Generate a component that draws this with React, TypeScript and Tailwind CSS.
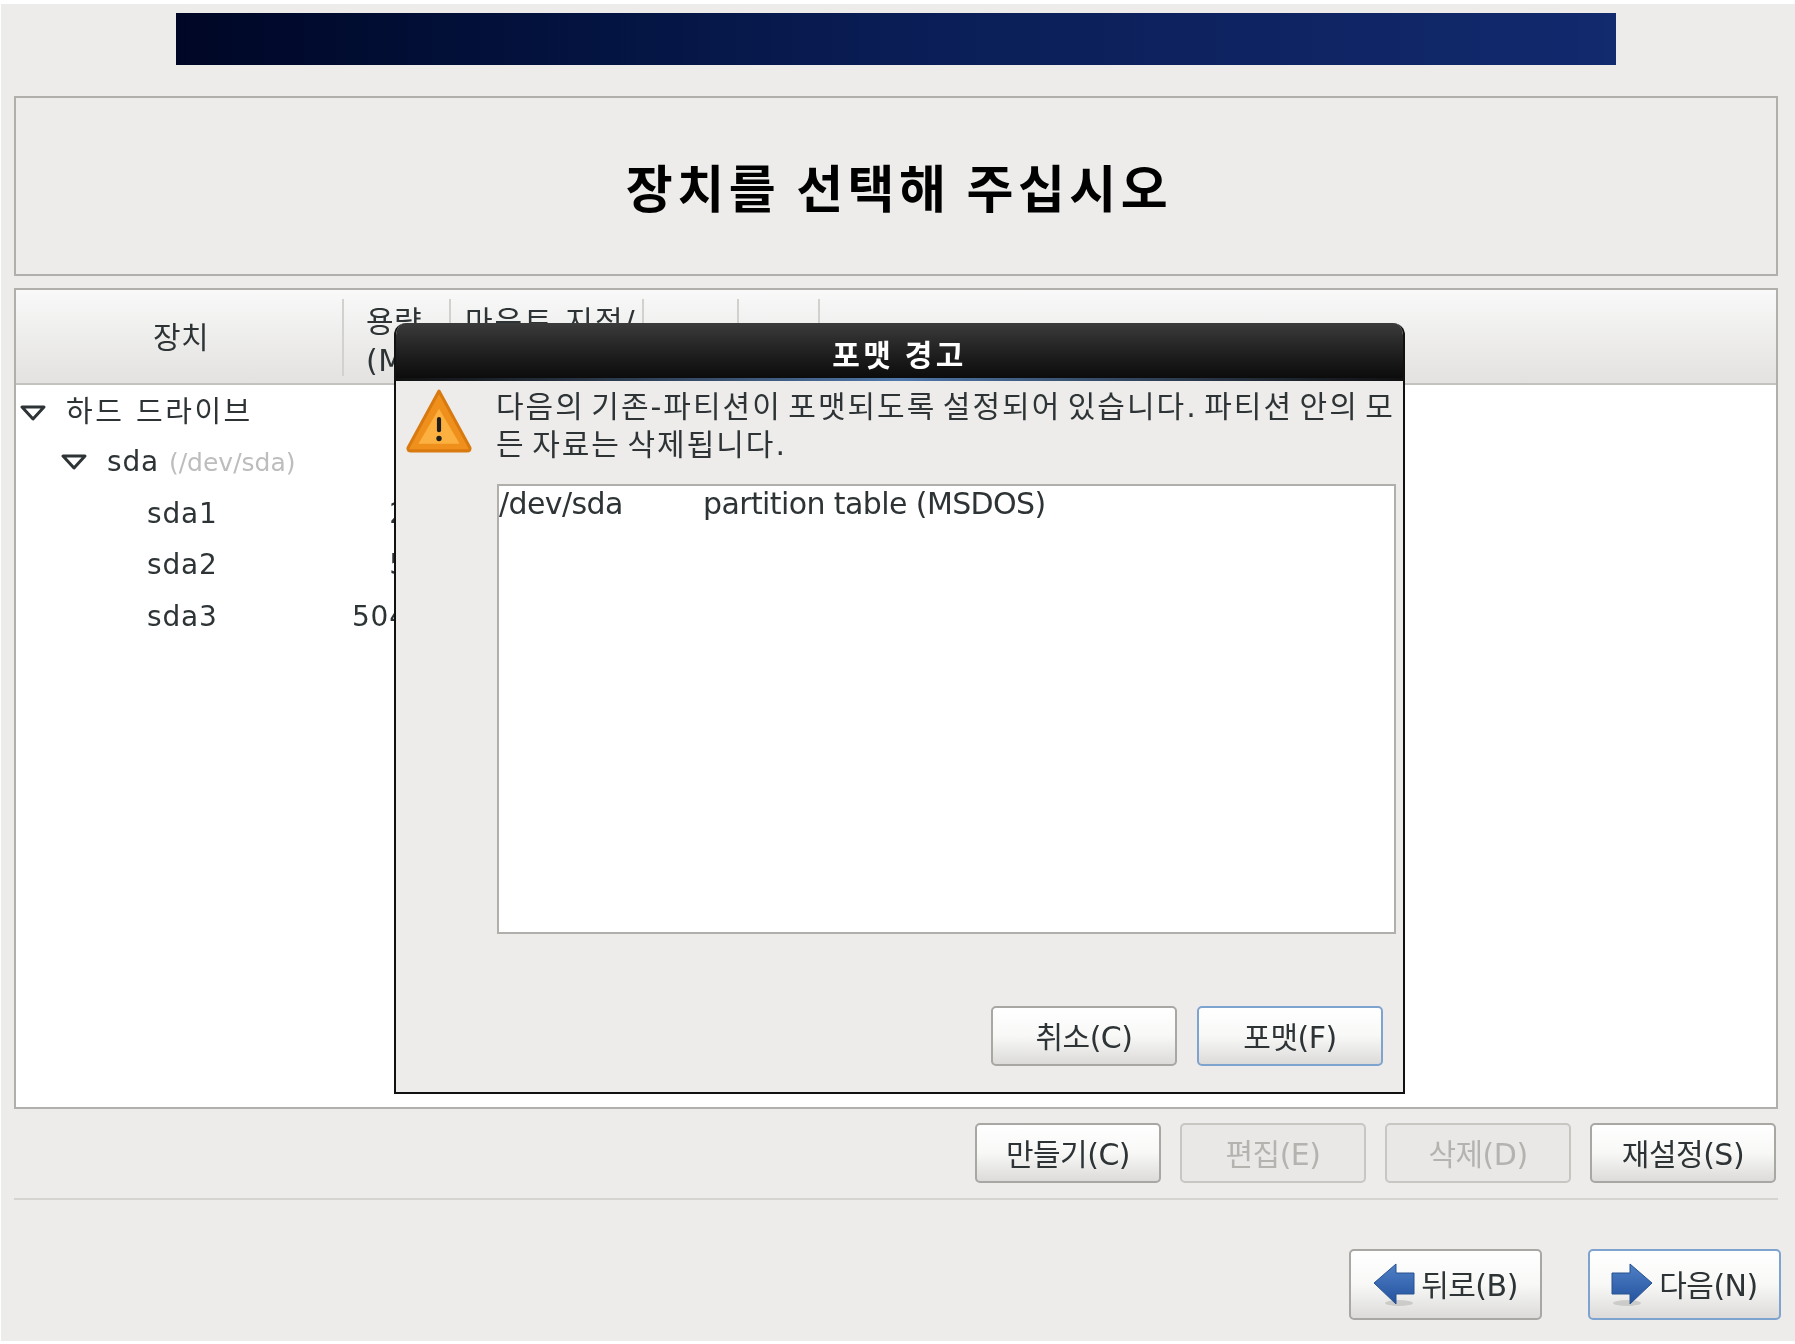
import React from "react";

const FONT = "font-['DejaVu_Sans','Noto_Sans_CJK_KR',sans-serif]";

function Btn({ label, focus, disabled, tall, icon }: { label: string; focus?: boolean; disabled?: boolean; tall?: boolean; icon?: React.ReactNode }) {
  const size = tall ? "w-[193px] h-[71px]" : "w-[186px] h-[60px]";
  const border = focus ? "border-2 border-[#7ea3cf]" : disabled ? "border-2 border-[#c8c6c3]" : "border-2 border-[#a9a7a3]";
  const bg = disabled ? "bg-[#e9e8e6] text-[#b5b3b0]" : "bg-gradient-to-b from-white via-[#f8f8f7] to-[#dcdbd9] text-[#2e3436]";
  return (
    <div className={`${size} ${border} ${bg} rounded-[5px] flex items-center justify-center gap-[6px] text-[30px] tracking-[-0.5px] whitespace-nowrap`}>
      {icon}
      <span className="pt-[2px]">{label}</span>
    </div>
  );
}

function Arrow({ dir }: { dir: "left" | "right" }) {
  return (
    <svg width="42" height="44" viewBox="0 0 42 44" className={dir === "right" ? "-scale-x-100" : ""}>
      <defs>
        <linearGradient id={`ar-${dir}`} x1="0" y1="0" x2="0" y2="1">
          <stop offset="0" stopColor="#4f80c6" />
          <stop offset="1" stopColor="#24529e" />
        </linearGradient>
      </defs>
      <ellipse cx="26" cy="40" rx="14" ry="3" fill="#000" opacity="0.12" />
      <path d="M1 20 L23 1 L23 10 L41 10 L41 31 L23 31 L23 41 Z" fill={`url(#ar-${dir})`} stroke="#27528f" strokeWidth="1" strokeLinejoin="round" />
    </svg>
  );
}

function Tri() {
  return (
    <svg width="26" height="16" viewBox="0 0 26 16">
      <path d="M2 2 L24 2 L13 14 Z" fill="none" stroke="#2e3436" strokeWidth="3" strokeLinejoin="round" />
    </svg>
  );
}

function Warning() {
  return (
    <svg width="68" height="66" viewBox="0 0 66 64" className="shrink-0" preserveAspectRatio="none">
      <path d="M33 3 L63 58 Q64 61 60 61 L6 61 Q2 61 3 58 Z" fill="#f0901c" stroke="#d97a10" strokeWidth="3" strokeLinejoin="round" />
      <path d="M33 20 L53 54 L13 54 Z" fill="#fbb040" />
      <rect x="31" y="28" width="4" height="15" rx="2" fill="#1d1d1b" />
      <circle cx="33" cy="49" r="2.6" fill="#1d1d1b" />
    </svg>
  );
}

export default function App() {
  return (
    <div className={`w-[1795px] h-[1344px] bg-white pt-[4px] pl-px overflow-hidden blur-[0.7px] ${FONT} text-[#2e3436]`}>
      <div className="relative h-[1337px] bg-[#edeceb] pt-[9px] pl-[13px] pr-[17px]">
        {/* banner */}
        <div className="ml-[162px] w-[1440px] h-[52px] bg-gradient-to-r from-[#000726] via-[#0a1d55] to-[#122a6e]" />

        {/* title */}
        <div className="mt-[31px] h-[180px] border-2 border-[#b1afab] flex items-center justify-center">
          <h1 className="ml-[6px] text-[51px] font-bold text-black tracking-[4.5px] font-['Noto_Sans_CJK_KR',sans-serif] leading-none">장치를 선택해 주십시오</h1>
        </div>

        {/* table */}
        <div className="mt-[12px] h-[821px] border-2 border-[#b1afab] bg-white flex flex-col">
          <div className="h-[95px] bg-gradient-to-b from-[#f9f9f9] to-[#e3e2e0] border-b-2 border-[#c4c2bf] flex pt-[9px] pb-[7px] text-[30px] tracking-[0.5px]">
            <div className="w-[328px] border-r-2 border-[#d3d1ce] flex items-center justify-center pl-[4px]">장치</div>
            <div className="w-[107px] border-r-2 border-[#d3d1ce] pl-[22px] pt-[3px] leading-[39px]">
              <div>용량</div>
              <div>(MB)</div>
            </div>
            <div className="w-[193px] border-r-2 border-[#d3d1ce] pl-[14px] pt-[3px] leading-[39px] whitespace-nowrap tracking-[2px]">마운트 지점/</div>
            <div className="w-[95px] border-r-2 border-[#d3d1ce]" />
            <div className="w-[81px] border-r-2 border-[#d3d1ce]" />
          </div>

          <div className="text-[28px] tracking-[0.8px]">
            <div className="h-[51.5px] pt-[4px] flex items-center pl-[4px] gap-[20px]">
              <Tri />
              <span className="text-[29px] tracking-[2.5px]">하드 드라이브</span>
            </div>
            <div className="h-[51.5px] flex items-center pl-[45px] gap-[20px]">
              <Tri />
              <span>sda</span>
              <span className="-ml-[10px] text-[25px] tracking-normal text-[#bdbdbd]">(/dev/sda)</span>
            </div>
            {[["sda1", "200"], ["sda2", "500"], ["sda3", "50400"]].map(([n, v]) => (
              <div key={n} className="h-[51.5px] flex items-center pl-[131px] whitespace-nowrap">
                <span className="w-[199px]">{n}</span>
                <span className="w-[99px] text-right">{v}</span>
              </div>
            ))}
          </div>
        </div>

        {/* actions */}
        <div className="mt-[14px] flex justify-end gap-[19px] pr-[2px]">
          <Btn label="만들기(C)" />
          <Btn label="편집(E)" disabled />
          <Btn label="삭제(D)" disabled />
          <Btn label="재설정(S)" />
        </div>

        <div className="mt-[15px] h-[2px] bg-[#d6d4d1]" />

        {/* nav */}
        <div className="mt-[49px] flex justify-end gap-[46px] -mr-[3px]">
          <Btn tall label="뒤로(B)" icon={<Arrow dir="left" />} />
          <Btn tall focus label="다음(N)" icon={<Arrow dir="right" />} />
        </div>

        {/* dialog */}
        <div className="absolute left-[393px] top-[319px] w-[1011px] h-[771px] flex flex-col rounded-t-[12px] overflow-hidden border-2 border-t-0 border-[#111] bg-[#edeceb]">
          <div className="h-[55px] shrink-0 bg-gradient-to-b from-[#3b3b3b] via-[#222] to-[#0c0c0c] flex items-center justify-center pt-[5px] text-white text-[30px] font-bold tracking-[3.5px] font-['Noto_Sans_CJK_KR',sans-serif]">
            포맷 경고
          </div>
          <div className="h-[3px] shrink-0 bg-gradient-to-r from-[#111] via-[#4f78ab] to-[#111]" />
          <div className="flex pl-[9px] pt-[7px] gap-[23px]">
            <Warning />
            <div className="w-[900px] text-[30px] leading-[38px] tracking-[2px] [word-spacing:-5px] whitespace-nowrap">
              <div>다음의 기존-파티션이 포맷되도록 설정되어 있습니다. 파티션 안의 모</div>
              <div>든 자료는 삭제됩니다.</div>
            </div>
          </div>
          <div className="ml-[101px] mt-[20px] w-[899px] h-[450px] border-2 border-[#b1afab] bg-white text-[30px] tracking-[-0.6px] flex whitespace-nowrap leading-[36px]">
            <span className="w-[204px]">/dev/sda</span>
            <span>partition table (MSDOS)</span>
          </div>
          <div className="mt-[72px] flex justify-end gap-[20px] pr-[20px]">
            <Btn label="취소(C)" />
            <Btn label="포맷(F)" focus />
          </div>
        </div>
      </div>
    </div>
  );
}
